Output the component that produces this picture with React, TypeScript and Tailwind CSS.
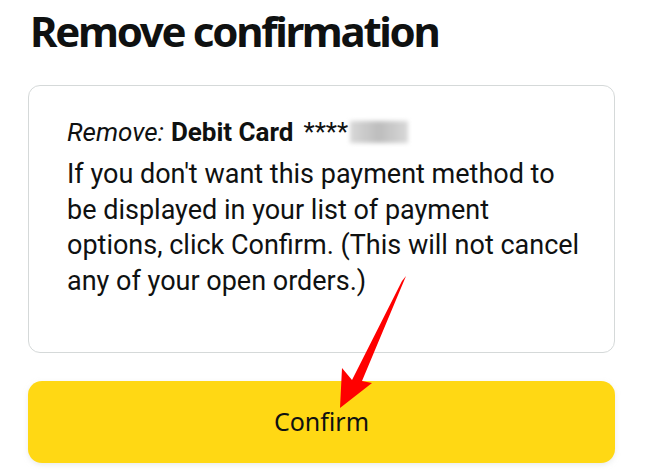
import React from "react";

export default function App() {
  return (
    <div
      className="relative w-[650px] h-[470px] overflow-hidden bg-white pl-[28px] pr-[35px] text-[#0f1111]"
      style={{ fontFamily: '"Noto Sans", "Open Sans", sans-serif' }}
    >
      <h1 className="pt-[4px] pl-[2px] text-[42px] leading-[54px] font-bold tracking-[-2.3px] text-[#0f1111]">
        Remove confirmation
      </h1>
      <div
        className="mt-[27px] h-[268px] rounded-[12px] border border-[#d5d9d9] pl-[38px] pr-[32px] pt-[28px]"
        style={{ fontFamily: 'Roboto, "Noto Sans", sans-serif' }}
      >
        <div className="flex items-center text-[26px] leading-[36px]">
          <span className="italic">Remove:</span>
          <span className="ml-[7px] font-bold">Debit Card</span>
          <span className="ml-[10px]">****</span>
          <span className="ml-[2px] h-[22px] w-[58px] bg-gradient-to-r from-[#d8d8d8] via-[#bdbdbd] to-[#d8d8d8] blur-[2px]" />
        </div>
        <p className="mt-[7px] text-[27px] leading-[35.5px]">
          If you don't want this payment method to be displayed in your list of payment options, click Confirm. (This will not cancel any of your open orders.)
        </p>
      </div>
      <button className="mt-[28px] flex h-[82px] w-full items-center justify-center rounded-[14px] bg-[#ffd814] text-[25px] text-[#0f1111] shadow-[0_2px_5px_rgba(213,217,217,0.5)]">
        Confirm
      </button>
      <svg className="absolute left-0 top-0" width="650" height="470" viewBox="0 0 650 470">
        <polygon
          points="402,281 406,276 362,381 372,383 340,408 342,368 352,380"
          fill="#ff0000"
        />
      </svg>
    </div>
  );
}
